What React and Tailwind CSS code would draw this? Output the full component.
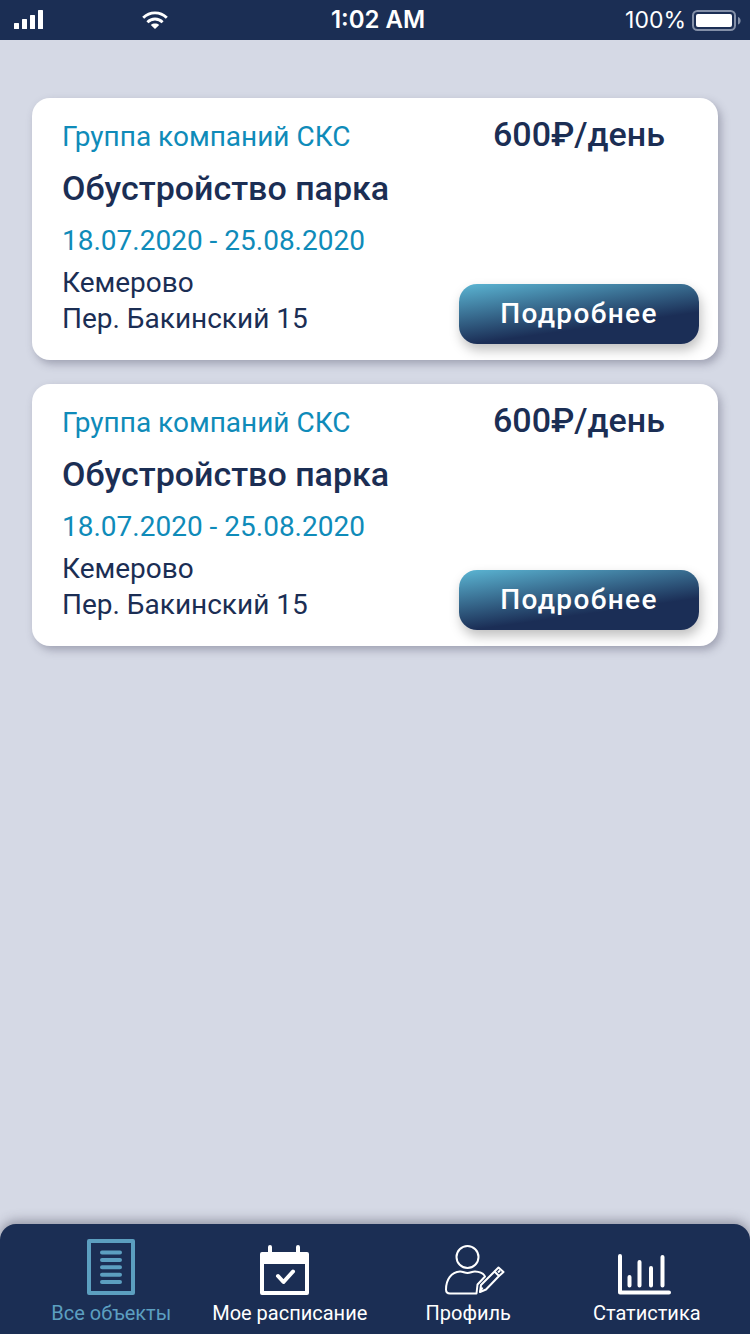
import { useState } from 'react'

const JOBS = [
  {
    id: 1,
    company: 'Группа компаний СКС',
    title: 'Обустройство парка',
    dates: '18.07.2020 - 25.08.2020',
    city: 'Кемерово',
    address: 'Пер. Бакинский 15',
    price: '600₽/день',
  },
  {
    id: 2,
    company: 'Группа компаний СКС',
    title: 'Обустройство парка',
    dates: '18.07.2020 - 25.08.2020',
    city: 'Кемерово',
    address: 'Пер. Бакинский 15',
    price: '600₽/день',
  },
]

const TABS = [
  { id: 'all', label: 'Все объекты', icon: DocumentIcon },
  { id: 'schedule', label: 'Мое расписание', icon: CalendarIcon },
  { id: 'profile', label: 'Профиль', icon: ProfileIcon },
  { id: 'stats', label: 'Статистика', icon: StatsIcon },
]

function DocumentIcon() {
  return (
    <svg width="48" height="56" viewBox="0 0 48 56" fill="none" stroke="currentColor" strokeWidth="4" aria-hidden="true">
      <rect x="2" y="2" width="44" height="52" strokeLinejoin="round" />
      <path d="M15 13.5H33M15 21H33M15 28.3H33M15 35.7H33M15 43H33" strokeLinecap="round" />
    </svg>
  )
}

function CalendarIcon() {
  return (
    <svg width="60" height="50" viewBox="0 0 60 50" fill="none" stroke="currentColor" strokeWidth="4" aria-hidden="true">
      <path d="M10 2V10M38 2V10" strokeLinecap="round" />
      <rect x="2" y="9" width="45" height="39" strokeLinejoin="round" />
      <path d="M2 8H47V19H2Z" fill="currentColor" stroke="none" />
      <path d="M18 31L23.5 37L33 26.5" strokeLinecap="round" strokeLinejoin="round" />
    </svg>
  )
}

function ProfileIcon() {
  return (
    <svg width="74" height="50" viewBox="2 0 74 50" fill="none" stroke="currentColor" strokeWidth="2" strokeLinejoin="round" aria-hidden="true">
      <circle cx="38.5" cy="12" r="11" />
      <path d="M55.500 30.500C53.500 28 50.500 26.800 46 26.600C43 26.500 41.500 28 38.500 28C35.500 28 34 26.500 31 26.600C22 27 17 35 17 44.500C17 47 18.300 48.500 21 48.500H47.500L48.500 39.500L56 31.500" strokeLinecap="round" />
      <path d="M51 47L52 40L65.5 26.5L70 31L57 44.5L51 47Z" />
      <path d="M65.5 26.5L69.5 22.5L74.5 27L70 31M69 27.5L71 25.5" />
      <path d="M51 47L53.5 42.5" />
    </svg>
  )
}

function StatsIcon() {
  return (
    <svg width="58" height="42" viewBox="0 0 58 42" fill="none" stroke="currentColor" strokeWidth="4" strokeLinecap="round" strokeLinejoin="round" aria-hidden="true">
      <path d="M2 3V39.5H51" />
      <path d="M11.5 24V32.5M21.5 9V32.5M33 15V32.5M44.5 4V32.5" />
    </svg>
  )
}

function StatusBar() {
  return (
    <header className="grid h-10 grid-cols-[1fr_auto_1fr] items-center bg-[#1b2e54] pr-2 pl-3.5 font-[Inter,sans-serif] text-white">
      <div className="flex items-center gap-[99px]">
        <svg width="29" height="20" viewBox="0 0 29 20" fill="currentColor" aria-hidden="true">
          <rect x="0" y="13" width="5" height="6" rx="0.5" />
          <rect x="8" y="9" width="5" height="10" rx="0.5" />
          <rect x="16" y="5" width="5" height="14" rx="0.5" />
          <rect x="24" y="0" width="5" height="19" rx="0.5" />
        </svg>
        <svg width="26" height="18" viewBox="0 0 26 18" fill="none" stroke="currentColor" strokeWidth="2.8" aria-hidden="true">
          <path d="M1.2 6.8C7.8 0.2 18.2 0.2 24.8 6.8" />
          <path d="M5.4 11.2C9.7 6.900 16.3 6.900 20.6 11.2" />
          <path d="M13 18L8.8 13.900C11.1 12 14.900 12 17.2 13.900Z" fill="currentColor" stroke="none" />
        </svg>
      </div>
      <span className="text-2xl leading-8 font-semibold">1:02 AM</span>
      <div className="flex items-center justify-end gap-1.5">
        <span className="text-[23px] leading-8">100%</span>
        <svg width="50" height="22" viewBox="0 0 50 22" fill="none" aria-hidden="true">
          <rect x="1" y="2" width="42" height="19" rx="4.5" stroke="#8490a8" strokeWidth="2" />
          <rect x="4" y="5" width="36" height="13" rx="2" fill="#fff" />
          <path d="M46 8C49.5 9 49.5 14.5 46 15.5Z" fill="#8490a8" />
        </svg>
      </div>
    </header>
  )
}

function JobCard({ job }) {
  return (
    <article className="flex justify-between rounded-[18px] bg-white pr-[19px] pl-[30px] shadow-[3px_4px_8px_rgba(60,60,85,0.35)]">
      <div className="pt-[21px] pb-[23px] text-[28px] leading-9">
        <p className="text-[#0f8bb9]">{job.company}</p>
        <h2 className="mt-[13px] text-[34px] leading-10 font-medium">{job.title}</h2>
        <p className="mt-[15px] text-[#0f8bb9]">{job.dates}</p>
        <p className="mt-1.5">{job.city}</p>
        <p>{job.address}</p>
      </div>
      <div className="flex w-60 flex-col items-center justify-between pt-4 pb-4">
        <p className="text-[34px] leading-10 font-medium">{job.price}</p>
        <button
          type="button"
          className="h-[60px] w-full rounded-[18px] bg-[linear-gradient(172deg,#5bb5d3_0%,#1b2e56_66%)] text-[28px] font-medium tracking-wider text-white shadow-[2px_6px_12px_rgba(0,0,0,0.25)]"
        >
          Подробнее
        </button>
      </div>
    </article>
  )
}

function TabBar({ active, onChange }) {
  return (
    <nav className="grid h-[110px] grid-cols-4 rounded-t-2xl bg-[#1b2e54] pr-3.5 pb-[7px] pl-[22px] shadow-[0_-3px_12px_rgba(60,60,80,0.45)]">
      {TABS.map(({ id, label, icon: Icon }) => (
        <button
          key={id}
          type="button"
          onClick={() => onChange(id)}
          className={`flex flex-col items-center justify-end gap-1 text-xl leading-7 whitespace-nowrap ${
            active === id ? 'text-[#5c9fc0]' : 'text-white'
          }`}
        >
          <Icon />
          <span>{label}</span>
        </button>
      ))}
    </nav>
  )
}

export default function App() {
  const [tab, setTab] = useState('all')

  return (
    <div className="flex min-h-screen flex-col bg-[#d5d9e5] font-[Roboto,sans-serif] text-[#1b2e54]">
      <StatusBar />
      <main className="flex flex-1 flex-col gap-6 px-8 pt-[58px] pb-8">
        {JOBS.map((job) => (
          <JobCard key={job.id} job={job} />
        ))}
      </main>
      <TabBar active={tab} onChange={setTab} />
    </div>
  )
}
